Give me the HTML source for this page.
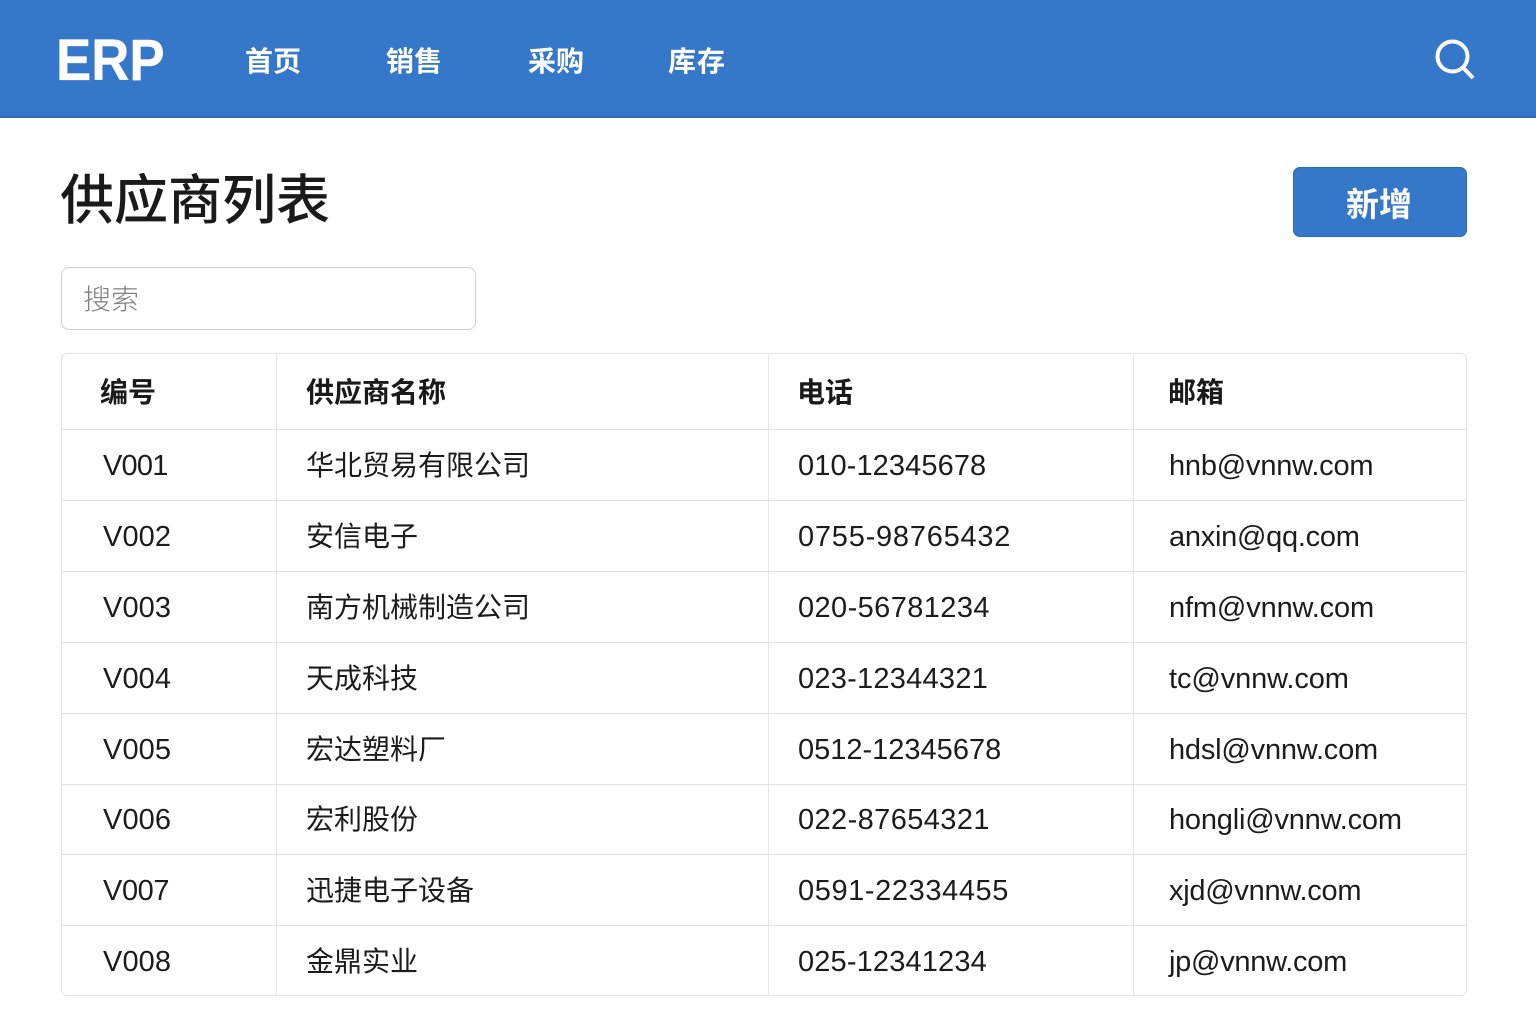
<!DOCTYPE html>
<html lang="zh-CN"><head><meta charset="utf-8"><title>供应商列表</title>
<style>
*{box-sizing:border-box}
html,body{margin:0;padding:0;width:1536px;height:1024px;overflow:hidden;background:#fff}
body{position:relative;font-family:"Liberation Sans","Noto Sans CJK SC",sans-serif;color:#1c1c1c}
.a{position:absolute;white-space:nowrap}
header{position:absolute;left:0;top:0;width:1536px;height:118px;background:#3577c9;border-bottom:2px solid #2a6cbd}
.nav{top:42px;font-size:28px;line-height:40px;font-weight:700;color:#fff}
.hl{position:absolute;left:62px;width:1404px;height:1px;background:#e0e2e4}
.vl{position:absolute;top:354px;height:641px;width:1px;background:#e6e7e9}
.t{position:absolute;height:40px;line-height:40px;font-size:29px;white-space:nowrap;color:#1c1c1c}
.th{font-weight:700;color:#1a1a1a;font-size:28px}
.c1{left:103px;letter-spacing:.1px}.c2{left:306px;font-size:28px}.c3{left:798px}.c4{left:1169px;letter-spacing:-.2px}
</style></head><body>
<header></header>
<div class="a" style="left:56px;top:28px;font-size:58px;line-height:66px;font-weight:700;color:#fff;-webkit-text-stroke:.3px #fff;transform:scaleX(.91);transform-origin:0 0">ERP</div>
<div class="a nav" style="left:245px">首页</div>
<div class="a nav" style="left:386px">销售</div>
<div class="a nav" style="left:528px">采购</div>
<div class="a nav" style="left:668px;letter-spacing:1px">库存</div>
<svg class="a" style="left:1430px;top:36px" width="48" height="46" viewBox="0 0 48 46"><circle cx="22.500" cy="20.500" r="15" fill="none" stroke="#fff" stroke-width="4"/><path d="M32.500 31 L43 42" fill="none" stroke="#fff" stroke-width="4"/></svg>

<div class="a" style="left:60px;top:162px;font-size:54px;line-height:78px;font-weight:500;color:#1a1a1a">供应商列表</div>
<div class="a" style="left:1293px;top:167px;width:174px;height:70px;background:#3577c9;border:1px solid #2a6cbd;border-radius:7px;color:#fff;font-size:33px;font-weight:700;line-height:74px;text-align:center;padding-right:2px">新增</div>
<div class="a" style="left:61px;top:267px;width:415px;height:63px;border:1px solid #cfd0d2;border-radius:8px;background:#fff;color:#808080;font-size:28px;line-height:63px;padding-left:21px;font-weight:300">搜索</div>

<div class="a" style="left:61px;top:353px;width:1406px;height:643px;border:1px solid #e3e4e6;border-radius:6px;background:#fff"></div>
<div class="vl" style="left:276px"></div><div class="vl" style="left:768px"></div><div class="vl" style="left:1133px"></div>
<div class="hl" style="top:429px"></div><div class="hl" style="top:500px"></div><div class="hl" style="top:571px"></div><div class="hl" style="top:642px"></div><div class="hl" style="top:713px"></div><div class="hl" style="top:784px"></div><div class="hl" style="top:854px"></div><div class="hl" style="top:925px"></div>

<div class="t th" style="left:100px;top:373px">编号</div><div class="t th c2" style="top:373px">供应商名称</div><div class="t th" style="left:797px;top:373px">电话</div><div class="t th" style="left:1168px;top:373px">邮箱</div>

<div class="t c1" style="top:446px;letter-spacing:-.8px">V001</div><div class="t c2" style="top:446px">华北贸易有限公司</div><div class="t c3" style="top:446px;letter-spacing:.1px">010-12345678</div><div class="t c4" style="top:446px">hnb@vnnw.com</div>
<div class="t c1" style="top:517px">V002</div><div class="t c2" style="top:517px">安信电子</div><div class="t c3" style="top:517px;letter-spacing:.77px">0755-98765432</div><div class="t c4" style="top:517px;letter-spacing:-.27px">anxin@qq.com</div>
<div class="t c1" style="top:588px">V003</div><div class="t c2" style="top:588px">南方机械制造公司</div><div class="t c3" style="top:588px;letter-spacing:.4px">020-56781234</div><div class="t c4" style="top:588px;letter-spacing:-.14px">nfm@vnnw.com</div>
<div class="t c1" style="top:659px">V004</div><div class="t c2" style="top:659px">天成科技</div><div class="t c3" style="top:659px;letter-spacing:.25px">023-12344321</div><div class="t c4" style="top:659px;letter-spacing:-.1px">tc@vnnw.com</div>
<div class="t c1" style="top:730px">V005</div><div class="t c2" style="top:730px">宏达塑料厂</div><div class="t c3" style="top:730px;letter-spacing:0">0512-12345678</div><div class="t c4" style="top:730px">hdsl@vnnw.com</div>
<div class="t c1" style="top:800px">V006</div><div class="t c2" style="top:800px">宏利股份</div><div class="t c3" style="top:800px;letter-spacing:.4px">022-87654321</div><div class="t c4" style="top:800px">hongli@vnnw.com</div>
<div class="t c1" style="top:871px;letter-spacing:-.4px">V007</div><div class="t c2" style="top:871px">迅捷电子设备</div><div class="t c3" style="top:871px;letter-spacing:.6px">0591-22334455</div><div class="t c4" style="top:871px;letter-spacing:-.27px">xjd@vnnw.com</div>
<div class="t c1" style="top:942px">V008</div><div class="t c2" style="top:942px">金鼎实业</div><div class="t c3" style="top:942px;letter-spacing:.15px">025-12341234</div><div class="t c4" style="top:942px;letter-spacing:-.27px">jp@vnnw.com</div>
</body></html>
